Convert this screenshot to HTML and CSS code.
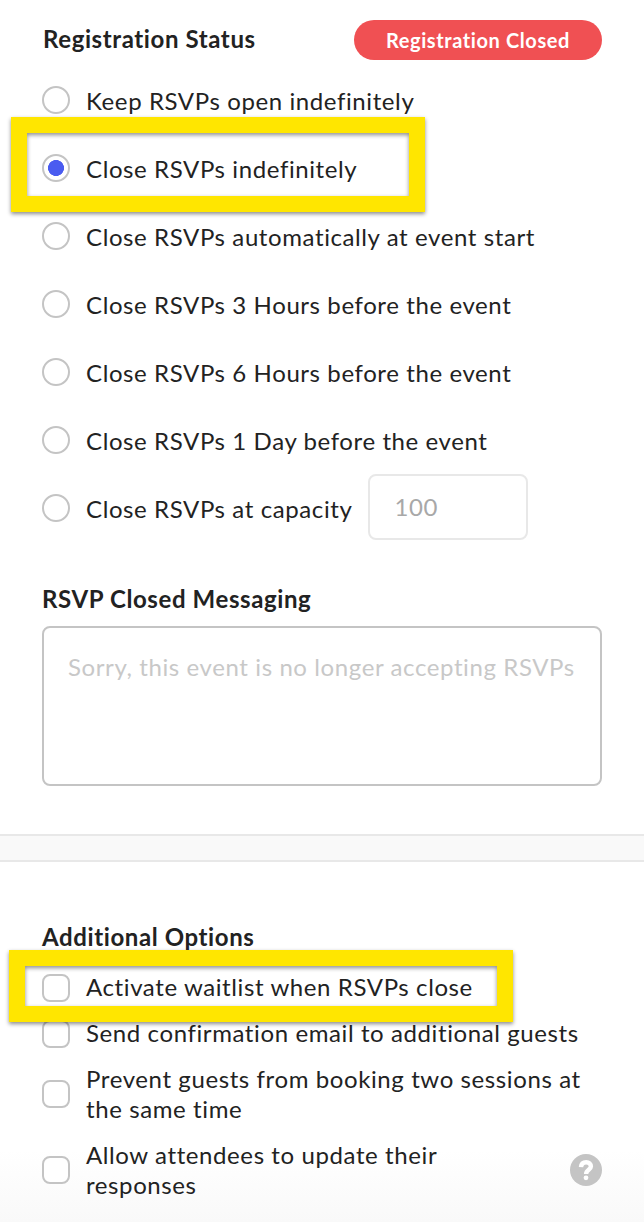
FILE: index.html
```html
<!DOCTYPE html>
<html lang="en">
<head>
    <meta charset="UTF-8">
    <meta name="viewport" content="width=device-width, initial-scale=1.0">
    <title>Registration settings</title>
    <link rel="stylesheet" href="styles.css">
</head>
<body>

    <form>
        <section class="registration">
            <div class="header">
                <h2>Registration Status</h2>
                <span class="status">Registration Closed</span>
            </div>

            <div class="radio-list">
                <label class="radio-row"><input type="radio" name="rsvp"><span>Keep RSVPs open indefinitely</span></label>
                <label class="radio-row">
                    <input type="radio" name="rsvp" checked><span>Close RSVPs indefinitely</span>
                    <i class="highlight highlight-radio"></i>
                </label>
                <label class="radio-row"><input type="radio" name="rsvp"><span>Close RSVPs automatically at event start</span></label>
                <label class="radio-row"><input type="radio" name="rsvp"><span>Close RSVPs 3 Hours before the event</span></label>
                <label class="radio-row"><input type="radio" name="rsvp"><span>Close RSVPs 6 Hours before the event</span></label>
                <label class="radio-row"><input type="radio" name="rsvp"><span>Close RSVPs 1 Day before the event</span></label>
                <div class="radio-row">
                    <input type="radio" name="rsvp" id="capacity"><label for="capacity">Close RSVPs at capacity</label>
                    <input type="text" class="capacity" placeholder="100">
                </div>
            </div>

            <h2 class="message-title">RSVP Closed Messaging</h2>
            <textarea class="message" placeholder="Sorry, this event is no longer accepting RSVPs"></textarea>
        </section>

        <div class="divider"></div>

        <section class="options">
            <h2>Additional Options</h2>
            <div class="check-list">
                <label class="check-row single">
                    <input type="checkbox"><span>Activate waitlist when RSVPs close</span>
                    <i class="highlight highlight-check"></i>
                </label>
                <label class="check-row single"><input type="checkbox"><span>Send confirmation email to additional guests</span></label>
                <label class="check-row"><input type="checkbox"><span>Prevent guests from booking two sessions at the same time</span></label>
                <label class="check-row">
                    <input type="checkbox"><span class="narrow">Allow attendees to update their responses</span>
                    <svg class="help" width="32" height="32" viewBox="0 0 32 32">
                        <circle cx="16" cy="16" r="16" fill="#c4c4c4"/>
                        <path d="M11 13.2C11.2 10 13.3 8.2 16.2 8.2C19 8.2 20.9 9.9 20.9 12.5C20.9 15.8 16.1 15.8 16.1 20" fill="none" stroke="#fff" stroke-width="4.4"/>
                        <circle cx="16" cy="23.8" r="2.4" fill="#fff"/>
                    </svg>
                </label>
            </div>
        </section>
    </form>

</body>
</html>
```
FILE: styles.css
```css
* {
    box-sizing: border-box;
}

body {
    margin: 0;
    height: 1222px;
    overflow: hidden;
    font-family: Lato, sans-serif;
    font-size: 24px;
    line-height: 30px;
    letter-spacing: 0.6px;
    color: #222222;
    background: linear-gradient(#ffffff 1150px, #f9f9f9 1222px);
}

h2 {
    margin: 0;
    font-size: 24px;
    line-height: 30px;
    font-weight: bold;
}

.registration {
    height: 834px;
    padding: 20px 42px 0;
}

.header {
    display: flex;
    justify-content: space-between;
    align-items: center;
    height: 40px;
}

.header h2 {
    padding: 0 0 2px 1px;
}

.status {
    width: 248px;
    height: 40px;
    border-radius: 20px;
    background-color: #f05053;
    color: #ffffff;
    font-size: 20px;
    font-weight: bold;
    line-height: 40px;
    text-align: center;
}

.radio-list {
    margin-top: 6px;
}

.radio-row {
    position: relative;
    display: flex;
    align-items: center;
    height: 68px;
}

.radio-row span,
.radio-row label {
    padding-top: 1px;
}

input[type="radio"],
input[type="checkbox"] {
    appearance: none;
    flex-shrink: 0;
    width: 28px;
    height: 28px;
    margin: 0 16px 0 0;
    border: 2px solid #c4c4c4;
    background-color: #ffffff;
}

input[type="radio"] {
    border-radius: 50%;
}

input[type="radio"]:checked {
    background: radial-gradient(circle, #4a5cf0 7.7px, #ffffff 8.3px);
}

input[type="checkbox"] {
    border-radius: 8px;
}

.capacity,
.message {
    font: inherit;
    letter-spacing: inherit;
    border: 2px solid #c4c4c4;
    border-radius: 8px;
    background-color: #ffffff;
    outline: none;
}

.capacity {
    width: 160px;
    height: 66px;
    margin: -2px 0 0 16px;
    padding: 0 24px 2px;
    border-color: #e8e8e8;
}

.capacity::placeholder {
    color: #a8a8a8;
}

.message-title {
    margin-top: 42px;
}

.message {
    display: block;
    width: 560px;
    height: 160px;
    margin-top: 12px;
    padding: 24px;
    resize: none;
    overflow: hidden;
}

.message::placeholder {
    color: #c8c8c8;
}

.divider {
    height: 28px;
    border-top: 2px solid #e8e8e8;
    border-bottom: 2px solid #e8e8e8;
    background-color: #f9f9f9;
}

.options {
    padding: 60px 42px 0;
}

.check-list {
    display: flex;
    flex-direction: column;
    gap: 16px;
    margin-top: 20px;
}

.check-row {
    position: relative;
    display: flex;
    align-items: center;
}

.single input[type="checkbox"] {
    margin-top: 2px;
}

.narrow {
    width: 400px;
}

.help {
    margin-left: auto;
}

/* yellow callout frames */
.highlight {
    position: absolute;
    z-index: 1;
    border: 16px solid #ffe600;
    box-shadow: 0 2px 4px rgba(0, 0, 0, 0.45), inset 0 2px 4px rgba(0, 0, 0, 0.45);
    pointer-events: none;
}

.highlight-radio {
    top: -17px;
    left: -31px;
    width: 414px;
    height: 95px;
}

.highlight-check {
    top: -22px;
    left: -33px;
    width: 504px;
    height: 72px;
}
```
